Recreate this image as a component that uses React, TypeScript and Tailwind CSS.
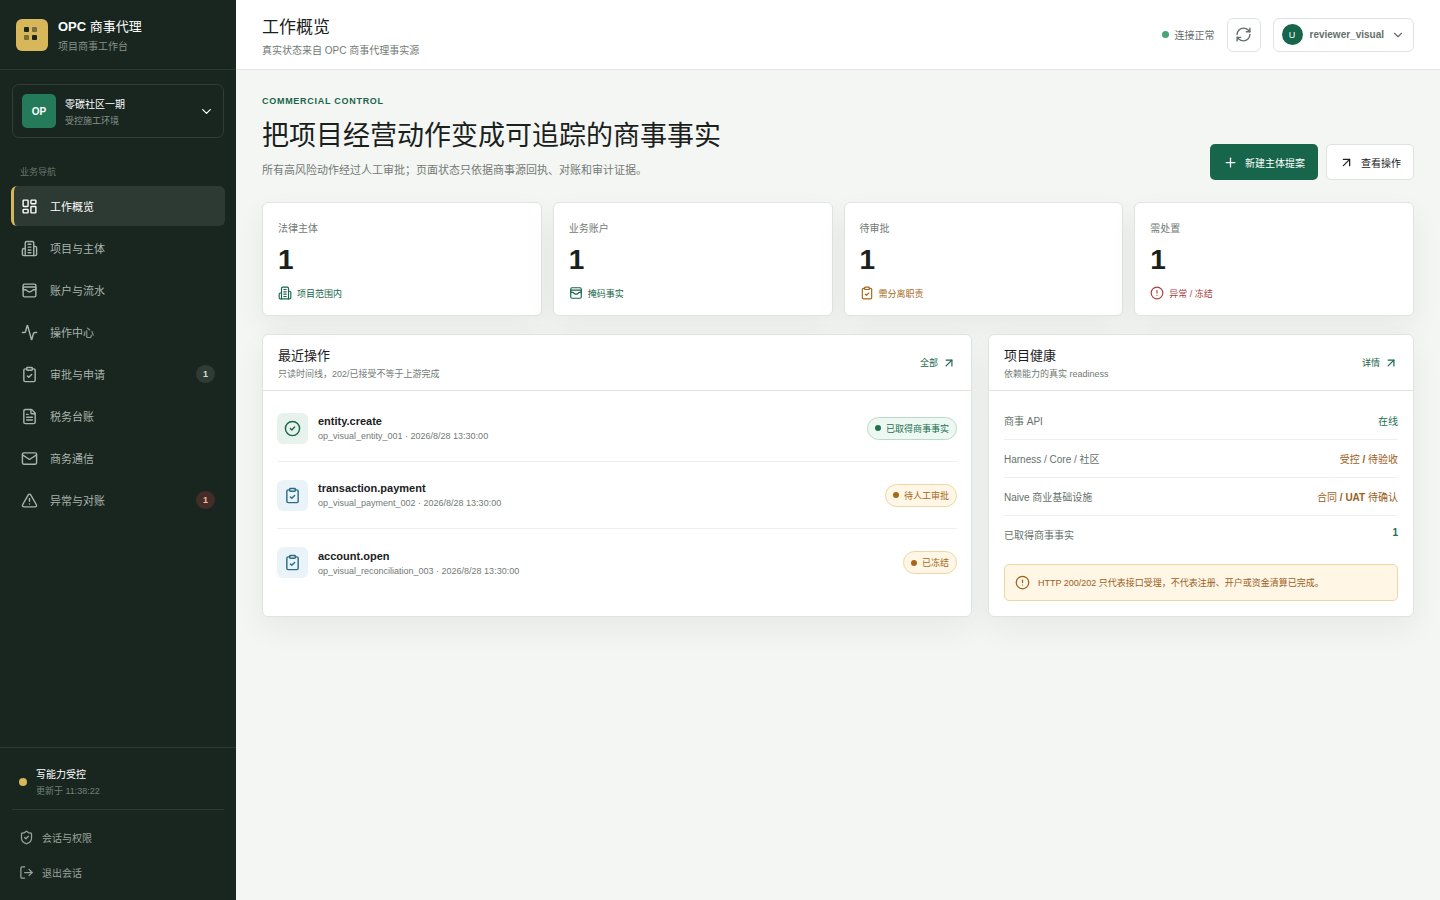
import type { ReactNode } from 'react';
import {
  Activity,
  ArrowUpRight,
  ChevronDown,
  CircleAlert,
  CircleCheck,
  ClipboardCheck,
  FileText,
  LayoutDashboard,
  LogOut,
  Mail,
  Plus,
  RefreshCw,
  ShieldCheck,
  TriangleAlert,
  WalletCards,
} from 'lucide-react';

type IconType = (props: { size?: number }) => ReactNode;

interface NavItem {
  label: string;
  icon: IconType | typeof Activity;
  active?: boolean;
  badge?: number;
  danger?: boolean;
}

// Office block with side wings and four rows of windows
function BuildingIcon({ size = 24 }: { size?: number }) {
  return (
    <svg
      width={size}
      height={size}
      viewBox="0 0 24 24"
      fill="none"
      stroke="currentColor"
      strokeWidth="2"
      strokeLinecap="round"
      strokeLinejoin="round"
      aria-hidden="true"
    >
      <path d="M6 22V4a2 2 0 0 1 2-2h8a2 2 0 0 1 2 2v18Z" />
      <path d="M6 12H4a2 2 0 0 0-2 2v6a2 2 0 0 0 2 2h2" />
      <path d="M18 9h2a2 2 0 0 1 2 2v9a2 2 0 0 1-2 2h-2" />
      <path d="M10 6h4M10 10h4M10 14h4M10 18h4" />
    </svg>
  );
}

const navItems: NavItem[] = [
  { label: '工作概览', icon: LayoutDashboard, active: true },
  { label: '项目与主体', icon: BuildingIcon },
  { label: '账户与流水', icon: WalletCards },
  { label: '操作中心', icon: Activity },
  { label: '审批与申请', icon: ClipboardCheck, badge: 1 },
  { label: '税务台账', icon: FileText },
  { label: '商务通信', icon: Mail },
  { label: '异常与对账', icon: TriangleAlert, badge: 1, danger: true },
];

const stats = [
  { label: '法律主体', value: 1, note: '项目范围内', icon: BuildingIcon, tone: 'text-[#17654a]' },
  { label: '业务账户', value: 1, note: '掩码事实', icon: WalletCards, tone: 'text-[#17654a]' },
  { label: '待审批', value: 1, note: '需分离职责', icon: ClipboardCheck, tone: 'text-[#a5681a]' },
  { label: '需处置', value: 1, note: '异常 / 冻结', icon: CircleAlert, tone: 'text-[#a83f3f]' },
];

const operations = [
  {
    name: 'entity.create',
    meta: 'op_visual_entity_001 · 2026/8/28 13:30:00',
    icon: CircleCheck,
    iconTone: 'bg-[#e8f2ed] text-[#17654a]',
    status: '已取得商事事实',
    statusTone: 'bg-[#edf8f2] border-[#b9dcc9] text-[#21704f]',
  },
  {
    name: 'transaction.payment',
    meta: 'op_visual_payment_002 · 2026/8/28 13:30:00',
    icon: ClipboardCheck,
    iconTone: 'bg-[#eaf4f8] text-[#2b6b85]',
    status: '待人工审批',
    statusTone: 'bg-[#fff6e6] border-[#ecd7a4] text-[#a5681a]',
  },
  {
    name: 'account.open',
    meta: 'op_visual_reconciliation_003 · 2026/8/28 13:30:00',
    icon: ClipboardCheck,
    iconTone: 'bg-[#eaf4f8] text-[#2b6b85]',
    status: '已冻结',
    statusTone: 'bg-[#fff6e6] border-[#ecd7a4] text-[#a5681a]',
  },
];

const health: { label: string; value: ReactNode; tone: string }[] = [
  { label: '商事 API', value: '在线', tone: 'text-[#21704f]' },
  { label: 'Harness / Core / 社区', value: <>受控 <b>/</b> 待验收</>, tone: 'text-[#9b601a]' },
  { label: 'Naive 商业基础设施', value: <>合同 <b>/ UAT</b> 待确认</>, tone: 'text-[#9b601a]' },
  { label: '已取得商事事实', value: <b>1</b>, tone: 'text-[#21704f]' },
];

function Logo() {
  return (
    <svg viewBox="0 0 32 32" className="size-8 shrink-0" aria-hidden="true">
      <rect width="32" height="32" rx="6" fill="#d8b65a" />
      <rect x="8" y="8" width="5" height="5" rx="1" fill="#18261f" />
      <rect x="16" y="8" width="5" height="5" rx="1" fill="#18261f" opacity="0.5" />
      <rect x="8" y="16" width="5" height="5" rx="1" fill="#18261f" opacity="0.5" />
      <rect x="16" y="16" width="5" height="5" rx="1" fill="#18261f" />
    </svg>
  );
}

function Sidebar() {
  return (
    <aside className="flex w-[236px] shrink-0 flex-col bg-[#18261f] text-white">
      <div className="flex h-[70px] items-center gap-[10px] border-b border-[#2a3831] px-4">
        <Logo />
        <div>
          <div className="text-[13px]">
            <b>OPC</b> 商事代理
          </div>
          <div className="mt-[3px] text-[10px] text-[#87928c]">项目商事工作台</div>
        </div>
      </div>

      {/* Project switcher */}
      <button
        type="button"
        className="mx-3 mt-[14px] flex h-[54px] items-center gap-[9px] rounded-[7px] border border-[#2f3d36] px-[9px] text-left"
      >
        <span className="grid size-[34px] place-items-center rounded-[5px] bg-[#247b5a] text-[10px] font-bold">
          OP
        </span>
        <span className="flex-1">
          <span className="block text-[10px]">零碳社区一期</span>
          <span className="mt-[3px] block text-[9px] text-[#87928c]">受控施工环境</span>
        </span>
        <ChevronDown size={15} />
      </button>

      <nav className="mt-[27px] px-[11px]" aria-labelledby="nav-title">
        <div id="nav-title" className="mb-2 px-[9px] text-[9px] text-[#68756e]">
          业务导航
        </div>
        <ul className="flex flex-col gap-[2px]">
          {navItems.map(({ label, icon: Icon, active, badge, danger }) => (
            <li key={label}>
              <a
                href="#"
                aria-current={active ? 'page' : undefined}
                className={`flex h-10 items-center gap-3 rounded-[6px] border-l-[3px] pr-[10px] pl-[7px] text-[11px] ${
                  active ? 'border-[#d8b65a] bg-[#2d3933] text-white' : 'border-transparent text-[#a9b3ad]'
                }`}
              >
                <Icon size={17} />
                <span className="flex-1">{label}</span>
                {badge && (
                  <span
                    className={`rounded-full px-[7px] py-1 text-[9px] font-bold ${
                      danger ? 'bg-[#442d26] text-[#f3b9a8]' : 'bg-[#2f3c36] text-[#d5dcd8]'
                    }`}
                  >
                    {badge}
                  </span>
                )}
              </a>
            </li>
          ))}
        </ul>
      </nav>

      {/* Footer */}
      <div className="mt-auto border-t border-[#2a3831] px-3 pt-[18px] pb-[10px]">
        <div className="flex items-center gap-[9px] border-b border-[#2a3831] px-[7px] pb-3">
          <span className="size-2 rounded-full bg-[#d8b65a]" />
          <div>
            <div className="text-[10px]">写能力受控</div>
            <div className="mt-[3px] text-[9px] text-[#73807a]">更新于 11:38:22</div>
          </div>
        </div>
        <div className="mt-[10px] flex flex-col">
          <a href="#" className="flex h-[35px] items-center gap-2 px-[7px] text-[10px] text-[#98a39d]">
            <ShieldCheck size={15} />
            会话与权限
          </a>
          <button type="button" className="flex h-[35px] items-center gap-2 px-[7px] text-[10px] text-[#98a39d]">
            <LogOut size={15} />
            退出会话
          </button>
        </div>
      </div>
    </aside>
  );
}

function Topbar() {
  return (
    <header className="flex h-[70px] items-center justify-between border-b border-[#dfe4e0] bg-white px-[26px]">
      <div>
        <h1 className="text-[17px]">工作概览</h1>
        <p className="mt-1 text-[10px] text-[#727a75]">真实状态来自 OPC 商事代理事实源</p>
      </div>
      <div className="flex items-center gap-3 text-[#66706a]">
        <div className="flex items-center gap-[6px] text-[10px]">
          <span className="size-[7px] rounded-full bg-[#45a574]" />
          连接正常
        </div>
        <button
          type="button"
          aria-label="刷新"
          className="grid size-[34px] place-items-center rounded-[6px] border border-[#dfe4e0] bg-white"
        >
          <RefreshCw size={17} />
        </button>
        <button
          type="button"
          className="flex h-[34px] items-center gap-[7px] rounded-[6px] border border-[#dfe4e0] bg-white px-2 text-[10px] font-bold"
        >
          <span className="grid size-[21px] place-items-center rounded-full bg-[#17654a] text-[9px] font-normal text-white">
            U
          </span>
          reviewer_visual
          <ChevronDown size={14} />
        </button>
      </div>
    </header>
  );
}

interface PanelProps {
  title: string;
  subtitle: string;
  link: string;
  children: ReactNode;
}

function Panel({ title, subtitle, link, children }: PanelProps) {
  return (
    <section className="rounded-[6px] border border-[#dfe4e0] bg-white shadow-[0_12px_30px_rgba(24,38,31,0.06)]">
      <div className="flex items-center justify-between border-b border-[#dfe4e0] px-[15px] py-[10px]">
        <div>
          <h3 className="text-[13px]">{title}</h3>
          <p className="mt-[3px] text-[9px] text-[#727a75]">{subtitle}</p>
        </div>
        <a href="#" className="flex items-center gap-1 text-[9px] text-[#17654a]">
          {link}
          <ArrowUpRight size={14} />
        </a>
      </div>
      {children}
    </section>
  );
}

export default function App() {
  return (
    <div className="flex min-h-screen bg-[#f4f6f3] font-['Liberation_Sans','Noto_Sans_CJK_SC',sans-serif] leading-[normal] text-[#1a211d]">
      <Sidebar />
      <div className="min-w-0 flex-1">
        <Topbar />
        <main className="px-[26px] pt-[26px] pb-8">
          <div className="flex items-end justify-between">
            <div className="pb-[3px]">
              <p className="text-[9px] font-bold tracking-[0.08em] text-[#17654a]">COMMERCIAL CONTROL</p>
              <h2 className="mt-2 text-[27px]">把项目经营动作变成可追踪的商事事实</h2>
              <p className="mt-2 text-[11px] text-[#727a75]">
                所有高风险动作经过人工审批；页面状态只依据商事源回执、对账和审计证据。
              </p>
            </div>
            <div className="flex gap-2 text-[10px]">
              <button
                type="button"
                className="flex h-9 items-center gap-[7px] rounded-[5px] bg-[#17654a] px-[13px] text-white"
              >
                <Plus size={15} />
                新建主体提案
              </button>
              <button
                type="button"
                className="flex h-9 items-center gap-[7px] rounded-[5px] border border-[#dfe4e0] bg-white px-3"
              >
                <ArrowUpRight size={15} />
                查看操作
              </button>
            </div>
          </div>

          {/* Stats */}
          <div className="mt-[22px] grid grid-cols-4 gap-[11px]">
            {stats.map(({ label, value, note, icon: Icon, tone }) => (
              <div
                key={label}
                className="rounded-[6px] border border-[#dfe4e0] bg-white px-[15px] pt-[17px] pb-[15px] shadow-[0_12px_30px_rgba(24,38,31,0.06)]"
              >
                <div className="text-[10px] text-[#727a75]">{label}</div>
                <div className="mt-[9px] text-[28px] font-bold">{value}</div>
                <div className={`mt-[10px] flex items-center gap-[5px] text-[9px] ${tone}`}>
                  <Icon size={14} />
                  {note}
                </div>
              </div>
            ))}
          </div>

          <div className="mt-[18px] grid grid-cols-[5fr_3fr] gap-4">
            <Panel title="最近操作" subtitle="只读时间线，202/已接受不等于上游完成" link="全部">
              <ul className="px-[14px] pt-1">
                {operations.map(({ name, meta, icon: Icon, iconTone, status, statusTone }) => (
                  <li
                    key={name}
                    className="flex h-[67px] items-center gap-[10px] border-b border-[#edf0ed] last:border-b-0"
                  >
                    <span className={`grid size-[31px] place-items-center rounded-[6px] ${iconTone}`}>
                      <Icon size={17} />
                    </span>
                    <div className="flex-1">
                      <div className="text-[11px] font-bold">{name}</div>
                      <div className="mt-1 text-[9px] text-[#727a75]">{meta}</div>
                    </div>
                    <span
                      className={`flex items-center gap-[5px] rounded-full border px-[7px] py-1 text-[9px] ${statusTone}`}
                    >
                      <span className="size-[6px] rounded-full bg-current" />
                      {status}
                    </span>
                  </li>
                ))}
              </ul>
            </Panel>

            <Panel title="项目健康" subtitle="依赖能力的真实 readiness" link="详情">
              <div className="px-[15px] pt-[11px] pb-[15px]">
                <dl>
                  {health.map(({ label, value, tone }) => (
                    <div
                      key={label}
                      className="flex justify-between border-b border-[#edf0ed] py-[11px] text-[10px] last:border-b-0"
                    >
                      <dt className="text-[#66706a]">{label}</dt>
                      <dd className={tone}>{value}</dd>
                    </div>
                  ))}
                </dl>
                <div className="mt-[11px] flex items-center gap-2 rounded-[5px] border border-[#ecd7a4] bg-[#fff6e6] p-[10px] text-[9px] text-[#9b601a]">
                  <CircleAlert size={15} />
                  <span>HTTP 200/202 只代表接口受理，不代表注册、开户或资金清算已完成。</span>
                </div>
              </div>
            </Panel>
          </div>
        </main>
      </div>
    </div>
  );
}
